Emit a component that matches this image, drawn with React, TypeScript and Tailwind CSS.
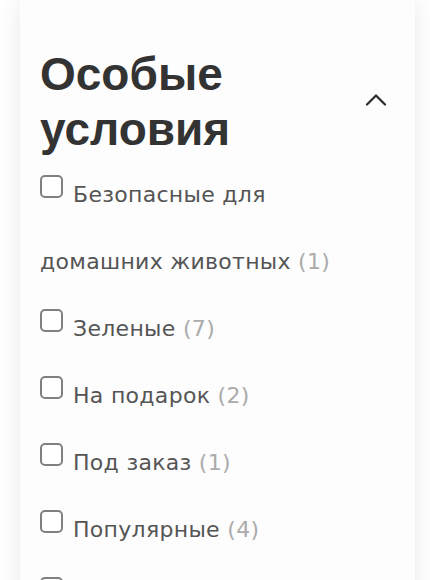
import React from 'react';

interface Option {
  label: string;
  count: number;
}

const options: Option[] = [
  { label: 'Безопасные для домашних животных', count: 1 },
  { label: 'Зеленые', count: 7 },
  { label: 'На подарок', count: 2 },
  { label: 'Под заказ', count: 1 },
  { label: 'Популярные', count: 4 },
  { label: 'Со скидкой', count: 3 },
];

const ChevronUp: React.FC = () => (
  <svg width="22" height="13" viewBox="0 0 22 13" fill="none" aria-hidden="true">
    <polyline
      points="2,11.5 11,2.5 20,11.5"
      stroke="#2b2b2b"
      strokeWidth="2.2"
      strokeLinecap="round"
      strokeLinejoin="round"
    />
  </svg>
);

const FilterOption: React.FC<Option> = ({ label, count }) => (
  <label className="block cursor-pointer text-[22px] leading-[67px] tracking-[0.3px] text-[#555555]">
    <span className="mr-[10px] inline-block h-[23px] w-[23px] rounded-[5px] border-2 border-[#808080] bg-white align-[4px]" />
    {label} <span className="text-[#ababab]">({count})</span>
  </label>
);

const App: React.FC = () => {
  return (
    <div className="min-h-screen overflow-hidden bg-white pl-5 pr-[15px]">
      <div
        className="min-h-[600px] bg-[#fdfdfd] pl-5 pr-6 pt-[47px] shadow-[0_0_22px_rgba(0,0,0,0.09)]"
        style={{ fontFamily: '"DejaVu Sans", "Noto Sans", sans-serif' }}
      >
        <div className="flex items-center justify-between">
          <h2
            className="text-[46px] font-bold leading-[55px] text-[#333333]"
            style={{ fontFamily: '"Liberation Sans", Arial, sans-serif' }}
          >
            Особые
            <br />
            условия
          </h2>
          <button type="button" className="mr-[4px] mt-[-6px]" aria-label="Свернуть">
            <ChevronUp />
          </button>
        </div>
        <div className="mt-1">
          {options.map((o) => (
            <FilterOption key={o.label} label={o.label} count={o.count} />
          ))}
        </div>
      </div>
    </div>
  );
};

export default App;
